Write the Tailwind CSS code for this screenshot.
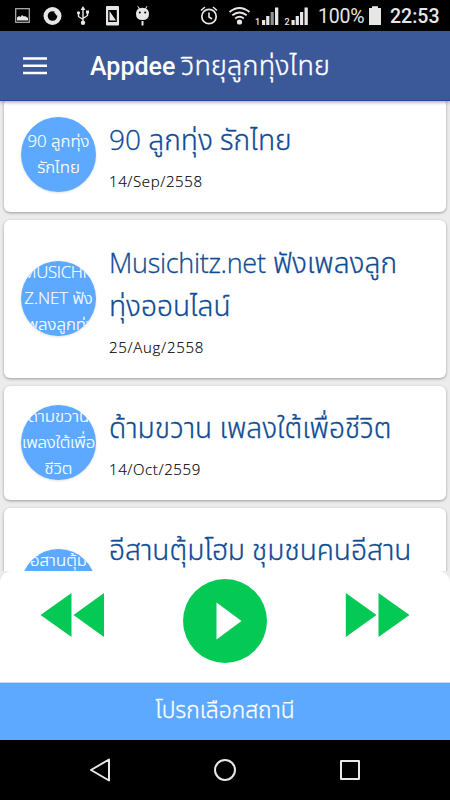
<!DOCTYPE html>
<html lang="th">
<head>
  <meta charset="UTF-8">
  <meta name="viewport" content="width=device-width, initial-scale=1.0">
  <title>Appdee วิทยุลูกทุ่งไทย</title>
  <script src="https://cdn.jsdelivr.net/npm/@tailwindcss/browser@4"></script>
</head>
<body class="flex h-[800px] w-[450px] flex-col overflow-hidden bg-black font-['Open_Sans','Noto_Sans_Thai',sans-serif]">

  <!-- Status bar -->
  <div class="flex h-[31px] shrink-0 items-center bg-black text-[#e6e6e6]">
    <svg class="h-[31px] w-[318px] shrink-0" viewBox="0 0 318 31" fill="none">
      <rect x="15.7" y="8.7" width="13.6" height="13.6" stroke="#b5b5b5" stroke-width="1.2" />
      <path d="M17 20.500v-3l2-1.500 1.500 1L22 15l2 1.500 1-.5 3 2v2.500z" fill="currentColor" />
      <circle cx="52.500" cy="16" r="6.900" stroke="currentColor" stroke-width="4.200" />
      <path d="M54 12l4-1-1 5z" fill="currentColor" />
      <path d="M83 8v14M78.500 13v3.500l4.500 3M87.500 12.500v3l-4.500 3" stroke="currentColor" stroke-width="1.400" />
      <path d="M83 6l2.400 4h-4.800zM86 10.500h3v3h-3z" fill="currentColor" />
      <circle cx="78.500" cy="12.800" r="1.600" fill="currentColor" />
      <circle cx="83" cy="22.800" r="2.200" fill="currentColor" />
      <path fill-rule="evenodd" d="M107 6h11q1 0 1 1v17.500q0 1-1 1h-11q-1 0-1-1V7q0-1 1-1zm1.200 4v12h8.600V10z" fill="currentColor" />
      <path d="M109.500 11v9.500h6.500z" fill="currentColor" />
      <path d="M136 14q0-4 2.700-5.200L137.300 6.300l.7-.4 1.700 2.300q2.700-.9 5.400 0l1.700-2.300.7.400-1.400 2.500Q149 10 149 14q0 6-6.500 6T136 14z" fill="currentColor" />
      <path d="M142.500 21v4.500" stroke="currentColor" stroke-width="2" />
      <circle cx="139.800" cy="12.500" r="1" fill="#000" />
      <circle cx="145.200" cy="12.500" r="1" fill="#000" />
      <!-- alarm -->
      <circle cx="209" cy="16.500" r="7.200" stroke="currentColor" stroke-width="1.700" />
      <path d="M209 12.500v4.500l3 2M201 10.500l4-3.500M217 10.500L213 7" stroke="currentColor" stroke-width="1.600" />
      <!-- wifi -->
      <path d="M229.500 12q10-8 20 0M232.300 15.300q7.200-5.600 14.400 0M235.200 18.400q4.300-3.200 8.600 0" stroke="currentColor" stroke-width="1.900" />
      <circle cx="239.500" cy="22" r="2.600" fill="currentColor" />
      <!-- sim signals -->
      <path d="M262 20h3.200v5H262zM266.200 16h3.200v9h-3.200zM275 7.500h3.300V25H275zM291.500 20h3.200v5h-3.200zM295.700 16h3.200v9h-3.200zM300 12h3.200v13H300zM304.500 7.500h3.300V25h-3.300z" fill="currentColor" />
      <path d="M270.600 12h3.200v13h-3.200z" fill="#8f8f8f" />
      <g fill="currentColor" font-family="Roboto, sans-serif" font-size="9" font-weight="500">
        <text x="255" y="24.500">1</text>
        <text x="284.500" y="24.500">2</text>
      </g>
    </svg>
    <span class="w-[51px] shrink-0 pt-[2px] font-[Roboto] text-[19.5px] leading-none tracking-[-0.2px]">100%</span>
    <svg class="h-[31px] w-3 shrink-0" viewBox="0 0 12 31"><path d="M0 8h3V6.300h6V8h3v17H0z" fill="currentColor" /></svg>
    <span class="ml-[9px] pt-[2px] font-[Roboto] text-[19.5px] font-medium leading-none">22:53</span>
  </div>

  <!-- App bar -->
  <header class="z-10 flex h-[70px] shrink-0 items-center border-b border-[#2449a0] bg-[#3b5998] pl-[23px] text-white shadow-[0_1px_4px_rgba(0,0,0,0.4)]">
    <svg class="h-[18px] w-6" viewBox="0 0 24 18"><path d="M0 1.500h24M0 8.700h24M0 16h24" stroke="#fff" stroke-width="2.600" /></svg>
    <h1 class="ml-[43px] flex items-baseline whitespace-nowrap leading-none">
      <span class="w-[91px] font-[Roboto] text-[25px] font-medium">Appdee</span>
      <span class="text-[26.8px] font-light tracking-[0.3px] [-webkit-text-stroke:0.4px]">วิทยุลูกทุ่งไทย</span>
    </h1>
  </header>

  <!-- Station list -->
  <main class="flex h-[470px] shrink-0 flex-col gap-2 overflow-hidden bg-[#ececec] px-1 text-[#0f4c94]">
    <article class="-mt-[3px] flex h-[114px] shrink-0 items-center rounded-md bg-white pl-[17px] shadow-[0_1px_3px_rgba(0,0,0,0.35)]">
      <div class="mb-[1px] flex size-[75px] shrink-0 flex-col items-center justify-center overflow-hidden whitespace-nowrap rounded-full bg-[#5ca9ff] pb-[1px] text-[16.8px] font-light leading-[26px] text-white shadow [-webkit-text-stroke:0.2px]">
        <span>90 ลูกทุ่ง</span>
        <span>รักไทย</span>
      </div>
      <div class="ml-[13px]">
        <h2 class="whitespace-nowrap text-[28.1px] font-light leading-[43px] [-webkit-text-stroke:0.3px]">90 ลูกทุ่ง รักไทย</h2>
        <p class="mt-[9px] text-[15px] font-light leading-[22px] tracking-[0.6px] text-black [-webkit-text-stroke:0.15px]">14/Sep/2558</p>
      </div>
    </article>

    <article class="flex h-[158px] shrink-0 items-center rounded-md bg-white pl-[17px] shadow-[0_1px_3px_rgba(0,0,0,0.35)]">
      <div class="mb-[2px] flex size-[75px] shrink-0 flex-col items-center justify-center overflow-hidden whitespace-nowrap rounded-full bg-[#5ca9ff] text-[16.8px] font-light leading-[26px] text-white shadow [-webkit-text-stroke:0.2px]">
        <span class="tracking-[-0.3px]">MUSICHIT</span>
        <span>Z.NET ฟัง</span>
        <span>เพลงลูกทุ่ง</span>
      </div>
      <div class="ml-[13px]">
        <h2 class="whitespace-nowrap text-[28.1px] font-light leading-[43px] [-webkit-text-stroke:0.3px]"><span class="text-[27px] tracking-[-0.3px]">Musichitz.net</span> ฟังเพลงลูก<br>ทุ่งออนไลน์</h2>
        <p class="mt-[9px] text-[15px] font-light leading-[22px] tracking-[0.7px] text-black [-webkit-text-stroke:0.15px]">25/Aug/2558</p>
      </div>
    </article>

    <article class="flex h-[114px] shrink-0 items-center rounded-md bg-white pl-[17px] shadow-[0_1px_3px_rgba(0,0,0,0.35)]">
      <div class="mb-[2px] flex size-[75px] shrink-0 flex-col items-center justify-center overflow-hidden whitespace-nowrap rounded-full bg-[#5ca9ff] text-[16.8px] font-light leading-[26px] text-white shadow [-webkit-text-stroke:0.2px]">
        <span>ด้ามขวาน</span>
        <span class="tracking-[-0.2px]">เพลงใต้เพื่อ</span>
        <span>ชีวิต</span>
      </div>
      <div class="ml-[13px]">
        <h2 class="whitespace-nowrap text-[28.1px] font-light leading-[43px] [-webkit-text-stroke:0.3px]">ด้ามขวาน เพลงใต้เพื่อชีวิต</h2>
        <p class="mt-[9px] text-[15px] font-light leading-[22px] tracking-[0.6px] text-black [-webkit-text-stroke:0.15px]">14/Oct/2559</p>
      </div>
    </article>

    <article class="flex h-[158px] shrink-0 items-start rounded-md bg-white pl-[17px] shadow-[0_1px_3px_rgba(0,0,0,0.35)]">
      <div class="mt-[41px] flex size-[75px] shrink-0 flex-col items-center overflow-hidden whitespace-nowrap rounded-full bg-[#5ca9ff] text-[16.8px] font-light leading-[26px] text-white shadow [-webkit-text-stroke:0.2px]">
        <span class="-mt-[2px]">อีสานตุ้ม</span>
      </div>
      <h2 class="ml-[13px] mt-[20px] whitespace-nowrap text-[28.1px] font-light leading-[43px] [-webkit-text-stroke:0.3px]">อีสานตุ้มโฮม ชุมชนคนอีสาน</h2>
    </article>
  </main>

  <!-- Player controls -->
  <section class="h-[112px] shrink-0 bg-[#ececec]">
    <div class="flex h-full items-start justify-between rounded-t-xl border-b border-[#c3d9f3] bg-white px-10">
      <svg class="mt-[22px] h-11 w-[65px]" viewBox="0 0 65 44" fill="#04c955"><path d="M.500 22L31.500 0v44zM33.500 22L64 0v44z" /></svg>
      <svg class="mt-2 size-[84px]" viewBox="0 0 84 84"><circle cx="42" cy="42" r="42" fill="#04c955" /><path d="M33.500 23.500v37L58.500 42z" fill="#fff" /></svg>
      <svg class="mt-[22px] h-11 w-[65px]" viewBox="0 0 65 44" fill="#04c955"><path d="M.800 0v44L31.500 22zM33.500 0v44L64.500 22z" /></svg>
    </div>
  </section>
  <div class="flex h-[57px] shrink-0 items-center justify-center bg-[#5ca9ff] pb-[3px] text-[22.8px] font-light text-white [-webkit-text-stroke:0.3px]">โปรกเลือกสถานี</div>

  <!-- Navigation bar -->
  <nav class="h-[60px] shrink-0 bg-black">
    <svg class="h-[60px] w-[450px]" viewBox="0 0 450 60" fill="none" stroke="#e8e8e8" stroke-width="2" stroke-linejoin="round">
      <path d="M91 30l18-10.500v21z" />
      <circle cx="225" cy="30" r="10" />
      <rect x="341" y="21" width="18" height="18" />
    </svg>
  </nav>
</body>
</html>
